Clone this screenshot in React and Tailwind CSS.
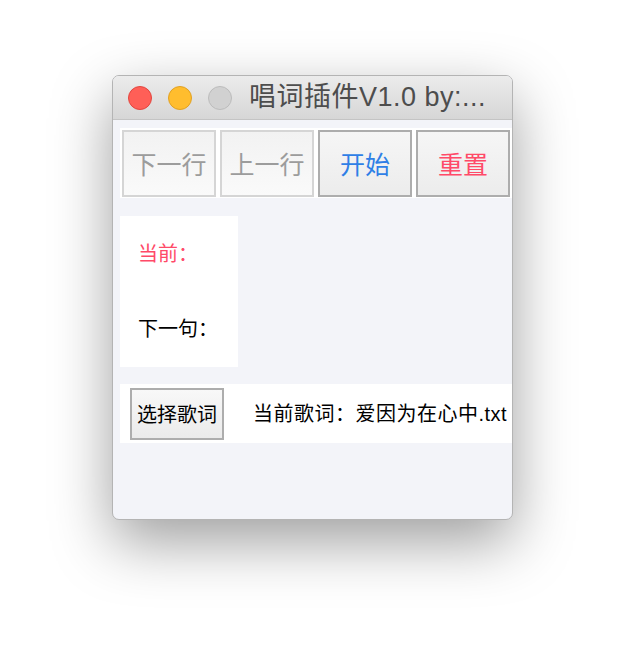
export default function App() {
  const font = { fontFamily: '"Liberation Sans", "Noto Sans CJK SC", sans-serif' }
  const cjk = { fontFamily: '"Noto Sans CJK SC", "Liberation Sans", sans-serif' }

  return (
    <div className="h-[668px] w-[624px] bg-white pl-[112px] pt-[75px]" style={font}>
      <div className="flex h-[445px] w-[401px] flex-col overflow-hidden rounded-[7px] border border-[#b4b4b4] bg-[#f3f4f9] shadow-[0_22px_60px_rgba(0,0,0,0.38)]">
        <div className="flex h-[44px] shrink-0 items-center border-b border-[#c4c4c4] bg-gradient-to-b from-[#ececec] to-[#d6d6d6] pl-[15px]">
          <div className="flex gap-[16px]">
            <span className="h-[24px] w-[24px] rounded-full border border-[#e2463f] bg-[#ff5f57]" />
            <span className="h-[24px] w-[24px] rounded-full border border-[#e1a123] bg-[#ffbd2e]" />
            <span className="h-[24px] w-[24px] rounded-full border border-[#bcbcbc] bg-[#d1d1d1]" />
          </div>
          <span className="ml-[17px] text-[27px] leading-none tracking-[0.5px] text-[#4d4d4d]">唱词插件V1.0 by:...</span>
        </div>

        <div className="flex flex-1 flex-col pl-[7px] pt-[8px]" style={cjk}>
          <div className="flex h-[70px] gap-[4px] bg-white pl-[2px] pt-[2px]">
            <button className="h-[67px] w-[94px] border-2 border-[#d5d5d5] bg-gradient-to-b from-[#f2f2f2] to-[#fafafa] text-[25px] text-[#9c9c9c]">下一行</button>
            <button className="h-[67px] w-[94px] border-2 border-[#d5d5d5] bg-gradient-to-b from-[#f2f2f2] to-[#fafafa] text-[25px] text-[#9c9c9c]">上一行</button>
            <button className="h-[67px] w-[94px] border-2 border-[#adadad] bg-gradient-to-b from-[#f6f6f6] to-[#ececec] text-[25px] text-[#2f7fe6]">开始</button>
            <button className="h-[67px] w-[94px] border-2 border-[#adadad] bg-gradient-to-b from-[#f6f6f6] to-[#ececec] text-[25px] text-[#ff4a68]">重置</button>
          </div>

          <div className="mt-[18px] flex h-[151px] w-[118px] flex-col bg-white pl-[18px] pt-[22px] text-[20px] leading-[30px]">
            <span className="text-[#ff4a68]">当前：</span>
            <span className="mt-[45px] text-black">下一句：</span>
          </div>

          <div className="mt-[17px] flex h-[59px] items-center bg-white pl-[10px]">
            <button className="h-[52px] w-[94px] border-2 border-[#adadad] bg-gradient-to-b from-[#f8f8f8] to-[#ebebeb] text-[20px] text-black">选择歌词</button>
            <span className="ml-[29px] whitespace-nowrap text-[20px] tracking-[0.5px] text-black" style={font}>当前歌词：爱因为在心中.txt</span>
          </div>
        </div>
      </div>
    </div>
  )
}
